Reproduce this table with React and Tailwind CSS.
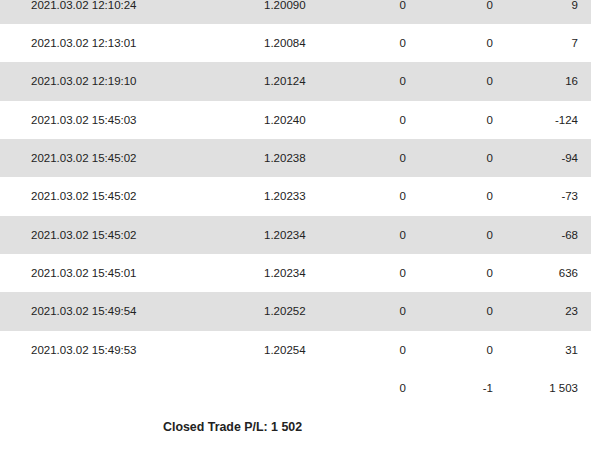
const rows = [
  ['2021.03.02 12:10:24', '1.20090', '0', '0', '9'],
  ['2021.03.02 12:13:01', '1.20084', '0', '0', '7'],
  ['2021.03.02 12:19:10', '1.20124', '0', '0', '16'],
  ['2021.03.02 15:45:03', '1.20240', '0', '0', '-124'],
  ['2021.03.02 15:45:02', '1.20238', '0', '0', '-94'],
  ['2021.03.02 15:45:02', '1.20233', '0', '0', '-73'],
  ['2021.03.02 15:45:02', '1.20234', '0', '0', '-68'],
  ['2021.03.02 15:45:01', '1.20234', '0', '0', '636'],
  ['2021.03.02 15:49:54', '1.20252', '0', '0', '23'],
  ['2021.03.02 15:49:53', '1.20254', '0', '0', '31'],
];

function Row({ cells, gray }) {
  return (
    <div className={`flex items-center h-[38.33px] pt-px ${gray ? 'bg-[#e0e0e0]' : 'bg-white'}`}>
      <div className="w-[264px] pl-[31px]">{cells[0]}</div>
      <div className="w-[110px]">{cells[1]}</div>
      <div className="w-[32px] text-right">{cells[2]}</div>
      <div className="w-[87px] text-right">{cells[3]}</div>
      <div className="w-[85px] text-right">{cells[4]}</div>
    </div>
  );
}

export default function App() {
  return (
    <div className="w-[600px] h-[459px] overflow-hidden bg-white text-[11.5px] text-[#222222] font-['Liberation_Sans',Arial,sans-serif]">
      <div className="w-[591px] -mt-[14.33px]">
        {rows.map((r, i) => (
          <Row key={i} cells={r} gray={i % 2 === 0} />
        ))}
        <Row cells={['', '', '0', '-1', '1 503']} gray={false} />
        <div className="flex items-center h-[38.33px] pt-px pl-[163px] font-bold text-[12.4px]">
          Closed Trade P/L: 1 502
        </div>
      </div>
    </div>
  );
}
